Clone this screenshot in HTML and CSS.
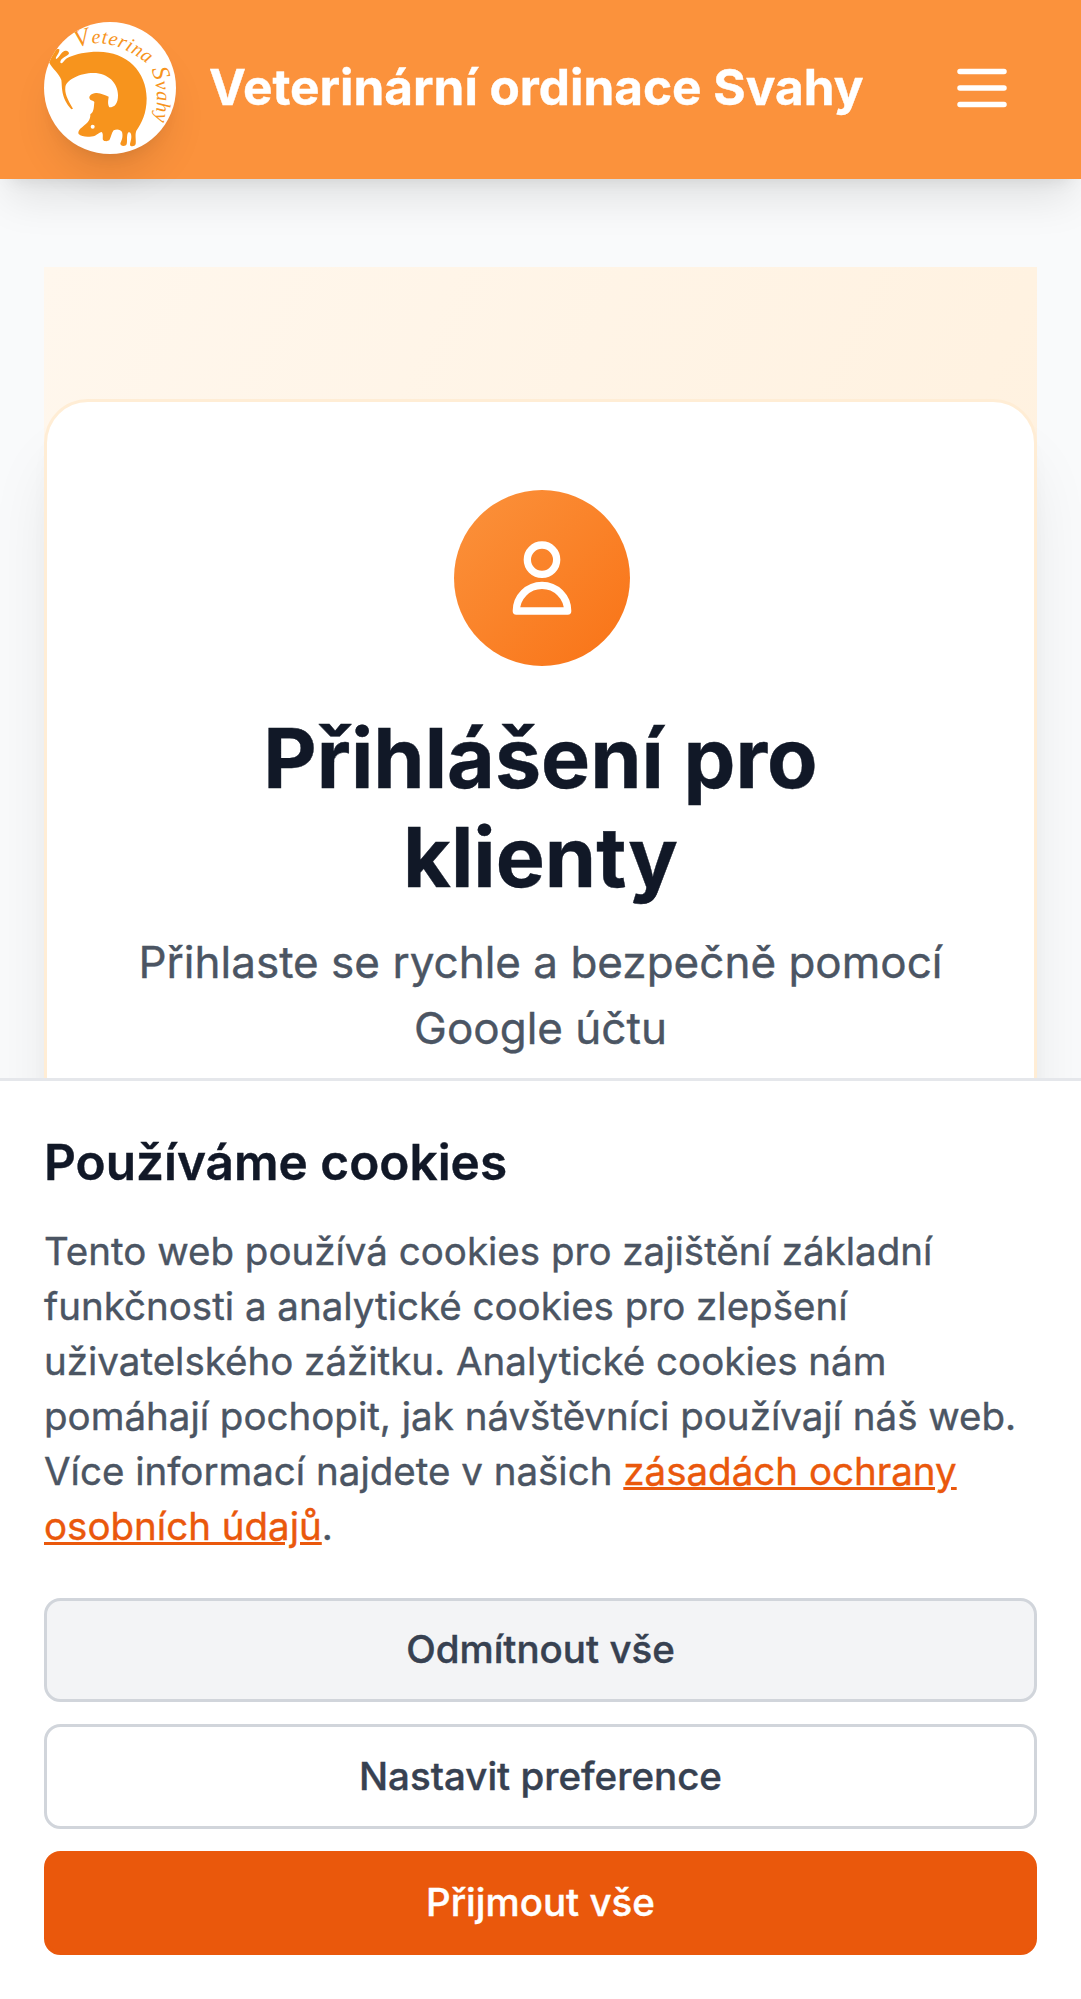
FILE: index.html
```html
<!DOCTYPE html>
<html lang="cs">
<head>
<meta charset="utf-8">
<title>Veterinární ordinace Svahy</title>
<link rel="stylesheet" href="styles.css">
</head>
<body>
<header class="header">
  <a class="brand" href="#">
    <svg class="brand-logo" viewBox="42 66 396 396" aria-hidden="true">
      <defs>
        <path id="arc-top" d="M140 145Q240 98 362 200"/>
        <path id="arc-side" d="M364 208Q398 290 364 404"/>
      </defs>
      <path fill="#f7941d" d="M88 148C74 145 68 152 64 166L57 187C66 205 88 222 94 240C97 262 92 292 124 328L129 326C112 298 104 280 106 262C108 240 150 219 190 219C235 219 264 250 264 285C264 310 255 322 238 322C232 310 235 300 236 290C225 286 212 278 198 279C184 280 175 289 179 296C182 303 190 300 193 306C191 325 192 335 181 343C182 360 172 370 158 380C148 387 143 396 146 402C155 412 180 412 195 407C203 403 208 397 215 396C221 402 217 412 219 420C224 425 233 424 238 421C244 410 244 400 251 391C260 386 272 388 276 396C280 410 275 422 271 430C271 438 280 440 288 436C294 428 288 410 294 398C300 394 304 400 304 410C304 422 298 430 301 437C307 441 315 438 317 432C319 420 314 405 319 392C335 370 350 340 350 295C350 215 290 155 205 155C165 155 140 162 118 171C105 176 100 188 95 190C90 190 90 185 93 180C98 172 115 168 117 160C116 150 105 150 98 156C90 163 85 176 78 177C75 170 90 160 88 148Z"/>
      <circle cx="188" cy="380" r="6" fill="#fff"/>
      <text class="logo-text"><textPath href="#arc-top"><tspan class="logo-initial">V</tspan>eterina</textPath></text>
      <text class="logo-text"><textPath href="#arc-side"><tspan class="logo-initial">S</tspan>vahy</textPath></text>
    </svg>
    <span class="brand-name">Veterinární ordinace Svahy</span>
  </a>
  <button class="menu-button" aria-label="Menu">
    <svg class="menu-icon" viewBox="0 0 24 24"><path d="M4 6h16M4 12h16M4 18h16"/></svg>
  </button>
</header>

<main class="page">
  <section class="login">
    <div class="card">
      <div class="avatar">
        <svg class="avatar-icon" viewBox="0 0 24 24"><path d="M16 7a4 4 0 11-8 0 4 4 0 018 0zM12 14a7 7 0 00-7 7h14a7 7 0 00-7-7z"/></svg>
      </div>
      <h1 class="card-title">Přihlášení pro klienty</h1>
      <p class="card-lead">Přihlaste se rychle a bezpečně pomocí Google účtu</p>
    </div>
  </section>
</main>

<aside class="cookies">
  <h2 class="cookies-title">Používáme cookies</h2>
  <p class="cookies-text">Tento web používá cookies pro zajištění základní funkčnosti a analytické cookies pro zlepšení uživatelského zážitku. Analytické cookies nám pomáhají pochopit, jak návštěvníci používají náš web. Více informací najdete v našich <a class="cookies-link" href="#">zásadách ochrany osobních údajů</a>.</p>
  <div class="cookies-actions">
    <button class="btn btn-muted">Odmítnout vše</button>
    <button class="btn btn-outline">Nastavit preference</button>
    <button class="btn btn-primary">Přijmout vše</button>
  </div>
</aside>
</body>
</html>
```
FILE: styles.css
```css
* {
  box-sizing: border-box;
  margin: 0;
}

body {
  display: flex;
  flex-direction: column;
  height: 100vh;
  overflow: hidden;
  background: #f9fafb;
  color: #111827;
  font-family: Inter, "Liberation Sans", sans-serif;
  -webkit-text-stroke: .4px;
}

button {
  font: inherit;
  -webkit-text-stroke: inherit;
}

.header {
  position: relative;
  z-index: 1;
  display: flex;
  flex: none;
  align-items: center;
  justify-content: space-between;
  height: 178.75px;
  padding: 0 44px 2.75px;
  background: #fb923c;
  box-shadow: 0 27.5px 41.25px -8.25px rgba(0, 0, 0, .1), 0 11px 16.5px -11px rgba(0, 0, 0, .1);
}

.brand {
  display: flex;
  align-items: center;
  gap: 33px;
  color: #fff;
  text-decoration: none;
}

.brand-logo {
  width: 132px;
  height: 132px;
  border-radius: 50%;
  background: #fff;
  box-shadow: 0 27.5px 41.25px -8.25px rgba(0, 0, 0, .1), 0 11px 16.5px -11px rgba(0, 0, 0, .1);
}

.logo-text {
  fill: #f7941d;
  font: italic 60px "Liberation Serif", serif;
  letter-spacing: 2px;
}

.logo-initial {
  font-size: 74px;
}

.brand-name {
  padding-bottom: 2px;
  font-size: 49.5px;
  font-weight: 700;
  line-height: 77px;
  white-space: nowrap;
}

.menu-button {
  display: flex;
  padding: 22px;
  border: 0;
  background: none;
}

.menu-icon {
  width: 66px;
  height: 66px;
}

.menu-icon,
.avatar-icon {
  fill: none;
  stroke: #fff;
  stroke-width: 2;
  stroke-linecap: round;
  stroke-linejoin: round;
}

.page {
  display: flex;
  flex: 1;
  flex-direction: column;
  min-height: 0;
  padding: 88px 44px 0;
}

.login {
  display: flex;
  flex: 1;
  flex-direction: column;
  padding-top: 132px;
  background: linear-gradient(to bottom right, #fff7ed, #ffedd5) 0 0 / 100% 2160px no-repeat;
}

.card {
  display: flex;
  flex: 1;
  flex-direction: column;
  padding: 88px 88px 0;
  border: 3px solid #ffedd5;
  border-bottom: 0;
  border-radius: 44px 44px 0 0;
  background: #fff;
  box-shadow: 0 55px 68.75px -13.75px rgba(0, 0, 0, .1), 0 22px 27.5px -16.5px rgba(0, 0, 0, .1);
  text-align: center;
}

.avatar {
  display: flex;
  flex: none;
  align-items: center;
  align-self: center;
  justify-content: center;
  width: 176px;
  height: 176px;
  margin: 0 0 43.5px 2px;
  border-radius: 50%;
  background: linear-gradient(to bottom right, #fb923c, #f97316);
}

.avatar-icon {
  width: 88px;
  height: 88px;
}

.card-title {
  margin-bottom: 22px;
  font-size: 82.5px;
  font-weight: 700;
  line-height: 99px;
}

.card-lead {
  color: #4b5563;
  font-size: 44px;
  line-height: 66px;
}

.cookies {
  position: fixed;
  z-index: 2;
  right: 0;
  bottom: 0;
  left: 0;
  padding: 43px 44px 44px;
  border-top: 3px solid #e5e7eb;
  background: #fff;
}

.cookies-title {
  margin-bottom: 23px;
  font-size: 49.5px;
  font-weight: 600;
  line-height: 77px;
}

.cookies-text {
  margin-bottom: 44px;
  color: #4b5563;
  font-size: 38.5px;
  line-height: 55px;
}

.cookies-link {
  color: #ea580c;
}

.cookies-actions {
  display: flex;
  flex-direction: column;
  gap: 22px;
}

.btn {
  height: 104.5px;
  border: 3px solid #d1d5db;
  border-radius: 16.5px;
  color: #374151;
  font-size: 38.5px;
  font-weight: 500;
  line-height: 55px;
}

.btn-muted {
  background: #f3f4f6;
}

.btn-outline {
  background: #fff;
}

.btn-primary {
  border-color: #ea580c;
  background: #ea580c;
  color: #fff;
}
```
